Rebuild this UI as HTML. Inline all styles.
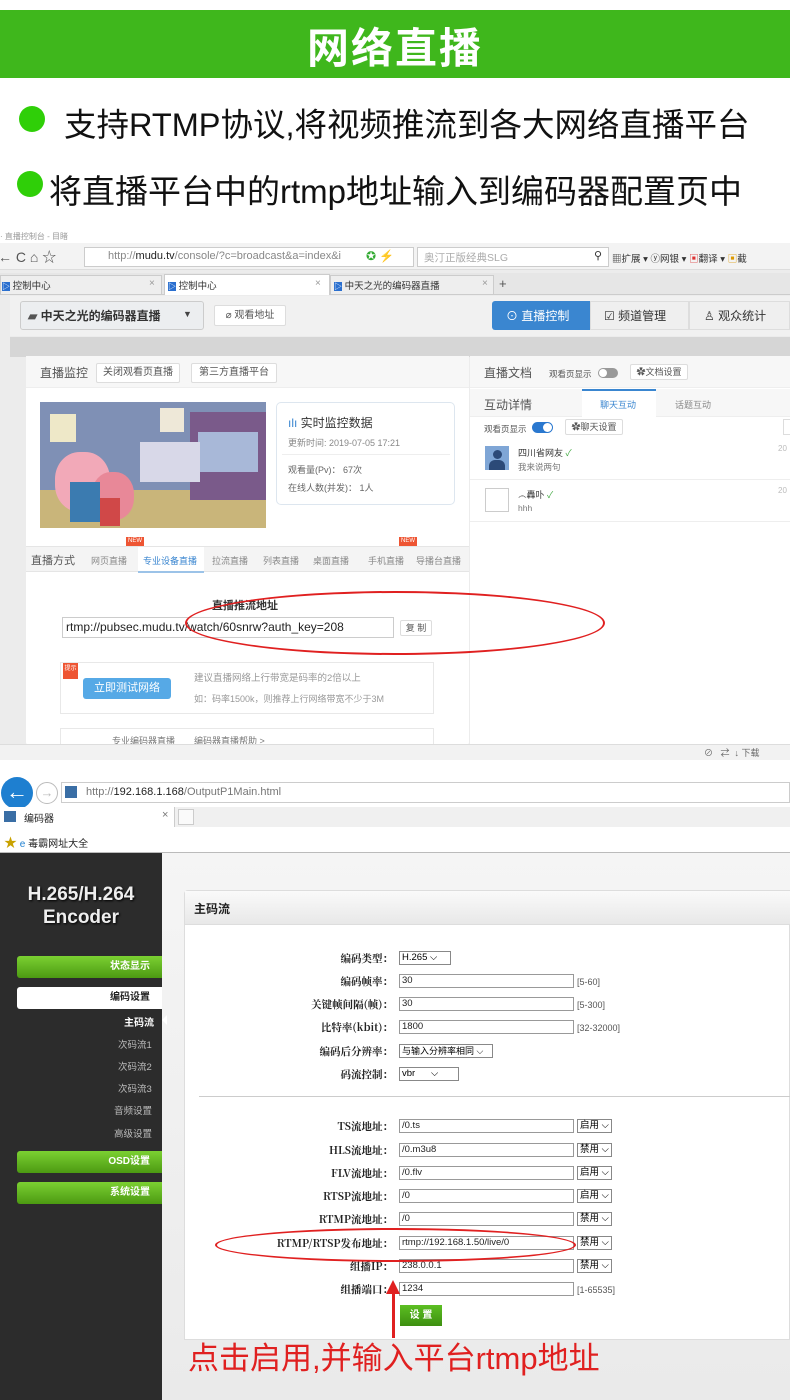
<!DOCTYPE html>
<html><head><meta charset="utf-8"><style>
*{margin:0;padding:0;box-sizing:border-box}
body{width:790px;height:1400px;position:relative;background:#fff;font-family:"Liberation Sans","Noto Sans CJK SC",sans-serif;overflow:hidden}
.a{position:absolute}
.t{position:absolute;white-space:nowrap}
.btn{position:absolute;background:#fff;border:1px solid #ddd;font-size:10px;color:#555;text-align:center;border-radius:2px}
.lbl{position:absolute;right:397px;font-size:10.5px;font-weight:bold;color:#222;white-space:nowrap;font-family:"Noto Serif CJK SC","Liberation Serif",serif}
.inp{position:absolute;left:399px;height:14px;border:1px solid #999;background:#fff;font-size:9.5px;padding-left:2px;line-height:12px;color:#222}
.sel{position:absolute;height:14px;border:1px solid #888;background:#fff;font-size:9.5px;padding-left:2px;line-height:12px}
.rng{position:absolute;left:577px;font-size:9px;color:#555}
.side{position:absolute;left:17px;width:145px;height:22px;border-radius:3px 0 0 3px;font-size:10px;text-align:right;padding-right:12px;line-height:22px;font-weight:bold}
.tb{position:absolute;top:554px;font-size:9px;color:#888;white-space:nowrap}
</style></head><body>

<!-- banner -->
<div class="a" style="left:0;top:10px;width:790px;height:68px;background:#3fb71c"></div>
<div class="t" style="left:0;width:790px;top:15px;text-align:center;font-size:42px;font-weight:bold;color:#fff;letter-spacing:2px">网络直播</div>
<div class="a" style="left:19px;top:106px;width:26px;height:26px;border-radius:50%;background:#2fcf08"></div>
<div class="t" style="left:64px;top:99px;font-size:32.5px;color:#111">支持RTMP协议,将视频推流到各大网络直播平台</div>
<div class="a" style="left:17px;top:171px;width:26px;height:26px;border-radius:50%;background:#2fcf08"></div>
<div class="t" style="left:49px;top:165px;font-size:33px;color:#111">将直播平台中的rtmp地址输入到编码器配置页中</div>

<!-- screenshot 1 -->
<div class="a" style="left:0;top:243px;width:790px;height:517px;background:#ececec"></div>
<div class="t" style="left:0;top:231px;font-size:8px;color:#999">· 直播控制台 - 目睹</div>
<div class="a" style="left:0;top:243px;width:790px;height:27px;background:#f3f3f3;border-bottom:1px solid #ddd"></div>
<div class="t" style="left:-2px;top:247px;font-size:14px;color:#555">← C ⌂ ☆</div>
<div class="a" style="left:84px;top:247px;width:330px;height:20px;background:#fff;border:1px solid #ccc"></div>
<div class="t" style="left:108px;top:250px;font-size:11px;color:#888">http://<b style="color:#222;font-weight:normal">mudu.tv</b>/console/?c=broadcast&amp;a=index&amp;i</div>
<div class="t" style="left:366px;top:249px;font-size:12px;color:#3a3">✪ <span style="color:#2c2">⚡</span></div>
<div class="a" style="left:417px;top:247px;width:192px;height:20px;background:#fff;border:1px solid #ccc"></div>
<div class="t" style="left:424px;top:250px;font-size:10.5px;color:#aaa">奥汀正版经典SLG</div>
<div class="t" style="left:594px;top:249px;font-size:11px;color:#333">⚲</div>
<div class="t" style="left:612px;top:251px;font-size:9.5px;color:#333">▦扩展 ▾ ⓨ网银 ▾ <span style="color:#d33">▣</span>翻译 ▾ <span style="color:#d90">▣</span>截</div>
<div class="a" style="left:0;top:273px;width:790px;height:22px;background:#e6e6e6;border-bottom:1px solid #ccc"></div>
<div class="a" style="left:0;top:275px;width:162px;height:20px;background:#eee;border:1px solid #ccc"></div>
<div class="a" style="left:164px;top:274px;width:166px;height:21px;background:#fff;border:1px solid #ccc;border-bottom:none"></div>
<div class="a" style="left:330px;top:275px;width:164px;height:20px;background:#eee;border:1px solid #ccc"></div>
<div class="t" style="left:2px;top:278px;font-size:9.5px;color:#333"><span style="background:#2a6fcf;color:#fff;font-size:8px">▷</span> 控制中心</div>
<div class="t" style="left:168px;top:278px;font-size:9.5px;color:#333"><span style="background:#2a6fcf;color:#fff;font-size:8px">▷</span> 控制中心</div>
<div class="t" style="left:334px;top:278px;font-size:9.5px;color:#333"><span style="background:#2a6fcf;color:#fff;font-size:8px">▷</span> 中天之光的编码器直播</div>
<div class="t" style="left:149px;top:278px;font-size:10px;color:#999">×</div>
<div class="t" style="left:315px;top:278px;font-size:10px;color:#999">×</div>
<div class="t" style="left:482px;top:278px;font-size:10px;color:#999">×</div>
<div class="t" style="left:499px;top:276px;font-size:13px;color:#555">+</div>
<div class="a" style="left:10px;top:296px;width:780px;height:40px;background:#f1f1f1"></div>
<div class="a" style="left:20px;top:301px;width:184px;height:29px;background:#eceef0;border:1px solid #ccc;border-radius:3px"></div>
<div class="t" style="left:28px;top:307px;font-size:12px;font-weight:bold;color:#333"><span style="color:#555">▰</span> 中天之光的编码器直播</div>
<div class="t" style="left:183px;top:309px;font-size:9px;color:#444">▼</div>
<div class="btn" style="left:214px;top:305px;width:72px;height:21px;line-height:19px">⌀ 观看地址</div>
<div class="a" style="left:492px;top:301px;width:98px;height:29px;background:#3a86d0;border-radius:3px 0 0 3px"></div>
<div class="t" style="left:506px;top:307px;font-size:12px;color:#fff">⊙ 直播控制</div>
<div class="a" style="left:590px;top:301px;width:99px;height:29px;background:#efefef;border:1px solid #ddd"></div>
<div class="t" style="left:604px;top:307px;font-size:12px;color:#333">☑ 频道管理</div>
<div class="a" style="left:689px;top:301px;width:101px;height:29px;background:#efefef;border:1px solid #ddd"></div>
<div class="t" style="left:704px;top:307px;font-size:12px;color:#333">♙ 观众统计</div>
<div class="a" style="left:10px;top:337px;width:780px;height:20px;background:#d6d6d6"></div>
<!-- right panel -->
<div class="a" style="left:470px;top:356px;width:320px;height:390px;background:#fff"></div>
<div class="a" style="left:470px;top:356px;width:320px;height:32px;background:#f7f7f7;border-bottom:1px solid #eee"></div>
<div class="t" style="left:484px;top:364px;font-size:12px;color:#555">直播文档</div>
<div class="t" style="left:549px;top:368px;font-size:8.5px;color:#555">观看页显示</div>
<div class="a" style="left:598px;top:368px;width:20px;height:10px;border-radius:5px;background:#999"></div>
<div class="a" style="left:599px;top:369px;width:8px;height:8px;border-radius:50%;background:#fff"></div>
<div class="btn" style="left:630px;top:364px;width:58px;height:16px;line-height:14px;font-size:9px">✿文档设置</div>
<div class="a" style="left:470px;top:389px;width:320px;height:28px;background:#f7f7f7;border-bottom:1px solid #eee"></div>
<div class="t" style="left:484px;top:396px;font-size:12px;color:#555">互动详情</div>
<div class="a" style="left:582px;top:389px;width:74px;height:29px;background:#fff;border-top:2px solid #3a86d0"></div>
<div class="t" style="left:600px;top:398px;font-size:9px;color:#3a86d0">聊天互动</div>
<div class="t" style="left:675px;top:398px;font-size:9px;color:#888">话题互动</div>
<div class="t" style="left:484px;top:423px;font-size:8.5px;color:#555">观看页显示</div>
<div class="a" style="left:532px;top:422px;width:21px;height:11px;border-radius:6px;background:#2a78cf"></div>
<div class="a" style="left:543px;top:423px;width:9px;height:9px;border-radius:50%;background:#fff"></div>
<div class="btn" style="left:565px;top:419px;width:58px;height:16px;line-height:14px;font-size:9px">✿聊天设置</div>
<div class="a" style="left:783px;top:419px;width:10px;height:16px;border:1px solid #ddd"></div>
<div class="a" style="left:485px;top:446px;width:24px;height:24px;background:#7fa6d6"></div>
<div class="a" style="left:493px;top:450px;width:9px;height:9px;border-radius:50%;background:#2c4a78"></div>
<div class="a" style="left:489px;top:460px;width:16px;height:10px;border-radius:6px 6px 0 0;background:#2c4a78"></div>
<div class="t" style="left:518px;top:446px;font-size:9px;color:#333">四川省网友 <span style="color:#4a4">✓</span></div>
<div class="t" style="left:518px;top:461px;font-size:8.5px;color:#777">我来说两句</div>
<div class="t" style="left:778px;top:444px;font-size:8px;color:#bbb">20</div>
<div class="a" style="left:470px;top:479px;width:320px;height:1px;background:#eee"></div>
<div class="a" style="left:485px;top:488px;width:24px;height:24px;border:1px solid #ccc"></div>
<div class="t" style="left:518px;top:488px;font-size:9px;color:#333">෴轟卟 <span style="color:#4a4">✓</span></div>
<div class="t" style="left:518px;top:503px;font-size:8.5px;color:#777">hhh</div>
<div class="t" style="left:778px;top:486px;font-size:8px;color:#bbb">20</div>
<div class="a" style="left:470px;top:521px;width:320px;height:1px;background:#eee"></div>
<!-- left panel -->
<div class="a" style="left:26px;top:356px;width:443px;height:390px;background:#fff;border-radius:4px"></div>
<div class="a" style="left:26px;top:356px;width:443px;height:32px;background:#f7f7f7;border-bottom:1px solid #eee"></div>
<div class="t" style="left:40px;top:364px;font-size:12px;color:#555">直播监控</div>
<div class="btn" style="left:96px;top:363px;width:84px;height:20px;line-height:18px">关闭观看页直播</div>
<div class="btn" style="left:191px;top:363px;width:86px;height:20px;line-height:18px">第三方直播平台</div>
<!-- peppa -->
<div class="a" style="left:40px;top:402px;width:226px;height:126px;background:#7f90b5;overflow:hidden">
 <div class="a" style="left:0;top:88px;width:226px;height:38px;background:#c9b57a"></div>
 <div class="a" style="left:150px;top:10px;width:76px;height:88px;background:#7a5a8a"></div>
 <div class="a" style="left:158px;top:30px;width:60px;height:40px;background:#a8b8d8"></div>
 <div class="a" style="left:10px;top:12px;width:26px;height:28px;background:#eee8c8"></div>
 <div class="a" style="left:120px;top:6px;width:24px;height:24px;background:#eee8d8"></div>
 <div class="a" style="left:15px;top:50px;width:55px;height:60px;border-radius:45%;background:#f2a9b8"></div>
 <div class="a" style="left:52px;top:70px;width:42px;height:48px;border-radius:45%;background:#e88898"></div>
 <div class="a" style="left:30px;top:80px;width:30px;height:40px;background:#3b7bb0"></div>
 <div class="a" style="left:60px;top:96px;width:20px;height:28px;background:#d04848"></div>
 <div class="a" style="left:100px;top:40px;width:60px;height:40px;background:#d8d8e8"></div>
</div>
<div class="a" style="left:276px;top:402px;width:179px;height:103px;border:1px solid #dde6ef;border-radius:5px"></div>
<div class="t" style="left:288px;top:414px;font-size:12px;color:#333"><span style="color:#3a86d0">ılı</span> 实时监控数据</div>
<div class="t" style="left:288px;top:436px;font-size:9px;color:#888">更新时间: 2019-07-05 17:21</div>
<div class="a" style="left:282px;top:454px;width:168px;height:1px;background:#eee"></div>
<div class="t" style="left:288px;top:463px;font-size:9px;color:#666">观看量(Pv)： 67次</div>
<div class="t" style="left:288px;top:481px;font-size:9px;color:#666">在线人数(并发)： 1人</div>
<!-- tabs -->
<div class="a" style="left:26px;top:546px;width:443px;height:26px;background:#f4f4f4;border-top:1px solid #e5e5e5;border-bottom:1px solid #e5e5e5"></div>
<div class="a" style="left:138px;top:547px;width:66px;height:26px;background:#fff;border-bottom:2px solid #9cc3e8"></div>
<div class="t" style="left:31px;top:552px;font-size:11px;color:#555">直播方式</div>
<div class="tb" style="left:91px">网页直播</div>
<div class="tb" style="left:143px;color:#3a86d0">专业设备直播</div>
<div class="tb" style="left:212px">拉流直播</div>
<div class="tb" style="left:263px">列表直播</div>
<div class="tb" style="left:313px">桌面直播</div>
<div class="tb" style="left:368px">手机直播</div>
<div class="tb" style="left:416px">导播台直播</div>
<div class="a" style="left:126px;top:537px;width:18px;height:9px;background:#e53;font-size:6px;color:#fff;text-align:center;line-height:9px">NEW</div>
<div class="a" style="left:399px;top:537px;width:18px;height:9px;background:#e53;font-size:6px;color:#fff;text-align:center;line-height:9px">NEW</div>
<div class="t" style="left:212px;top:597px;font-size:11px;font-weight:bold;color:#333">直播推流地址</div>
<div class="a" style="left:62px;top:617px;width:332px;height:21px;border:1px solid #ccc"></div>
<div class="t" style="left:66px;top:620px;font-size:12px;color:#222">rtmp://pubsec.mudu.tv/watch/60snrw?auth_key=208</div>
<div class="btn" style="left:400px;top:620px;width:32px;height:16px;font-size:9px;line-height:14px">复 制</div>
<div class="a" style="left:60px;top:662px;width:374px;height:52px;border:1px solid #e8e8e8"></div>
<div class="a" style="left:63px;top:663px;width:15px;height:16px;background:#e53;font-size:6px;color:#fff;text-align:center">提示</div>
<div class="a" style="left:83px;top:678px;width:88px;height:21px;background:#56a9e6;border-radius:3px;color:#fff;font-size:11px;text-align:center;line-height:21px">立即测试网络</div>
<div class="t" style="left:194px;top:670px;font-size:9.5px;color:#999">建议直播网络上行带宽是码率的2倍以上</div>
<div class="t" style="left:194px;top:692px;font-size:9px;color:#999">如：码率1500k，则推荐上行网络带宽不少于3M</div>
<div class="a" style="left:60px;top:728px;width:374px;height:18px;border:1px solid #e8e8e8;border-bottom:none"></div>
<div class="t" style="left:112px;top:734px;font-size:9px;color:#777">专业编码器直播</div>
<div class="t" style="left:194px;top:734px;font-size:9px;color:#777">编码器直播帮助 &gt;</div>
<div class="a" style="left:185px;top:591px;width:420px;height:64px;border:2px solid #e02020;border-radius:50%;z-index:5"></div>
<div class="a" style="left:0;top:744px;width:790px;height:16px;background:#f2f2f2;border-top:1px solid #ddd"></div>
<div class="t" style="left:704px;top:746px;font-size:9px;color:#666">⊘ &nbsp;&nbsp;⇄ &nbsp;↓ 下载</div>

<!-- screenshot 2 -->
<div class="a" style="left:0;top:775px;width:790px;height:80px;background:#fff"></div>
<div class="a" style="left:1px;top:777px;width:32px;height:32px;border-radius:50%;background:#1e7fd0;color:#fff;font-size:22px;font-weight:bold;text-align:center;line-height:30px">←</div>
<div class="a" style="left:36px;top:782px;width:22px;height:22px;border-radius:50%;border:1px solid #bbb;color:#bbb;font-size:13px;text-align:center;line-height:20px">→</div>
<div class="a" style="left:61px;top:782px;width:729px;height:21px;border:1px solid #ccc"></div>
<div class="a" style="left:65px;top:786px;width:12px;height:12px;background:#3a6ea5"></div>
<div class="t" style="left:86px;top:786px;font-size:11px;color:#777">http://<span style="color:#222">192.168.1.168</span>/OutputP1Main.html</div>
<div class="a" style="left:0;top:807px;width:790px;height:20px;background:#f0f0f0"></div>
<div class="a" style="left:0;top:807px;width:175px;height:20px;background:#fff;border-right:1px solid #ccc"></div>
<div class="a" style="left:4px;top:811px;width:12px;height:11px;background:#3a6ea5"></div>
<div class="t" style="left:24px;top:810px;font-size:10px;color:#222">编码器</div>
<div class="t" style="left:162px;top:809px;font-size:11px;color:#777">×</div>
<div class="a" style="left:178px;top:809px;width:16px;height:16px;border:1px solid #ccc;background:#fafafa"></div>
<div class="t" style="left:4px;top:832px;font-size:10px;color:#222"><span style="color:#c9a200;font-size:13px">★</span> <span style="color:#1e7fd0">e</span> 毒霸网址大全</div>
<div class="a" style="left:0;top:852px;width:790px;height:1px;background:#bbb"></div>
<div class="a" style="left:0;top:853px;width:162px;height:547px;background:#2c2c2c"></div>
<div class="a" style="left:162px;top:853px;width:628px;height:547px;background:linear-gradient(#f5f5f5,#eaeaea)"></div>
<div class="t" style="left:0;width:162px;top:883px;text-align:center;font-size:19px;font-weight:bold;color:#eee;line-height:23px;text-shadow:1px 1px 2px #000">H.265/H.264<br>Encoder</div>
<div class="side" style="top:956px;background:linear-gradient(#7bd032,#4c9a12);color:#fff">状态显示</div>
<div class="side" style="top:987px;background:#fff;color:#222">编码设置</div>
<div class="t" style="left:124px;top:1014px;font-size:10px;color:#fff;font-weight:bold">主码流</div>
<div class="a" style="left:157px;top:1015px;width:0;height:0;border:5px solid transparent;border-right-color:#fff"></div>
<div class="t" style="left:118px;top:1037px;font-size:9.5px;color:#bbb">次码流1</div>
<div class="t" style="left:118px;top:1059px;font-size:9.5px;color:#bbb">次码流2</div>
<div class="t" style="left:118px;top:1081px;font-size:9.5px;color:#bbb">次码流3</div>
<div class="t" style="left:114px;top:1103px;font-size:9.5px;color:#bbb">音频设置</div>
<div class="t" style="left:114px;top:1126px;font-size:9.5px;color:#bbb">高级设置</div>
<div class="side" style="top:1151px;background:linear-gradient(#7bd032,#4c9a12);color:#fff">OSD设置</div>
<div class="side" style="top:1182px;background:linear-gradient(#7bd032,#4c9a12);color:#fff">系统设置</div>
<!-- panel -->
<div class="a" style="left:184px;top:890px;width:606px;height:450px;background:#fff;border:1px solid #ddd;border-radius:4px 0 0 0"></div>
<div class="a" style="left:185px;top:891px;width:605px;height:34px;background:linear-gradient(#fafafa,#e8e8e8);border-bottom:1px solid #ddd"></div>
<div class="t" style="left:194px;top:900px;font-size:12px;font-weight:bold;color:#222">主码流</div>

<div class="lbl" style="top:951px">编码类型：</div><div class="sel" style="left:399px;top:951px;width:52px">H.265 ⌵</div>
<div class="lbl" style="top:974px">编码帧率：</div><div class="inp" style="top:974px;width:175px">30</div><div class="rng" style="top:977px">[5-60]</div>
<div class="lbl" style="top:997px">关键帧间隔(帧)：</div><div class="inp" style="top:997px;width:175px">30</div><div class="rng" style="top:1000px">[5-300]</div>
<div class="lbl" style="top:1020px">比特率(kbit)：</div><div class="inp" style="top:1020px;width:175px">1800</div><div class="rng" style="top:1023px">[32-32000]</div>
<div class="lbl" style="top:1044px">编码后分辨率：</div><div class="sel" style="left:399px;top:1044px;width:94px;font-size:9px">与输入分辨率相同 ⌵</div>
<div class="lbl" style="top:1067px">码流控制：</div><div class="sel" style="left:399px;top:1067px;width:60px">vbr &nbsp;&nbsp;&nbsp;&nbsp;&nbsp;⌵</div>
<div class="a" style="left:199px;top:1096px;width:591px;height:1px;background:#ccc"></div>

<div class="lbl" style="top:1119px">TS流地址：</div><div class="inp" style="top:1119px;width:175px">/0.ts</div><div class="sel" style="left:577px;top:1119px;width:35px">启用 ⌵</div>
<div class="lbl" style="top:1143px">HLS流地址：</div><div class="inp" style="top:1143px;width:175px">/0.m3u8</div><div class="sel" style="left:577px;top:1143px;width:35px">禁用 ⌵</div>
<div class="lbl" style="top:1166px">FLV流地址：</div><div class="inp" style="top:1166px;width:175px">/0.flv</div><div class="sel" style="left:577px;top:1166px;width:35px">启用 ⌵</div>
<div class="lbl" style="top:1189px">RTSP流地址：</div><div class="inp" style="top:1189px;width:175px">/0</div><div class="sel" style="left:577px;top:1189px;width:35px">启用 ⌵</div>
<div class="lbl" style="top:1212px">RTMP流地址：</div><div class="inp" style="top:1212px;width:175px">/0</div><div class="sel" style="left:577px;top:1212px;width:35px">禁用 ⌵</div>
<div class="lbl" style="top:1236px">RTMP/RTSP发布地址：</div><div class="inp" style="top:1236px;width:175px">rtmp://192.168.1.50/live/0</div><div class="sel" style="left:577px;top:1236px;width:35px">禁用 ⌵</div>
<div class="lbl" style="top:1259px">组播IP：</div><div class="inp" style="top:1259px;width:175px">238.0.0.1</div><div class="sel" style="left:577px;top:1259px;width:35px">禁用 ⌵</div>
<div class="lbl" style="top:1282px">组播端口：</div><div class="inp" style="top:1282px;width:175px">1234</div><div class="rng" style="top:1285px">[1-65535]</div>
<div class="a" style="left:400px;top:1305px;width:42px;height:21px;background:linear-gradient(#5cbf22,#3d8f10);color:#fff;font-size:10px;font-weight:bold;text-align:center;line-height:21px">设 置</div>
<div class="a" style="left:215px;top:1228px;width:361px;height:34px;border:2px solid #e02020;border-radius:50%"></div>
<div class="a" style="left:392px;top:1290px;width:3px;height:48px;background:#e02020"></div>
<div class="a" style="left:386px;top:1280px;width:0;height:0;border-left:7px solid transparent;border-right:7px solid transparent;border-bottom:14px solid #e02020"></div>
<div class="t" style="left:188px;top:1333px;font-size:31px;color:#e02020">点击启用,并输入平台rtmp地址</div>
</body></html>
